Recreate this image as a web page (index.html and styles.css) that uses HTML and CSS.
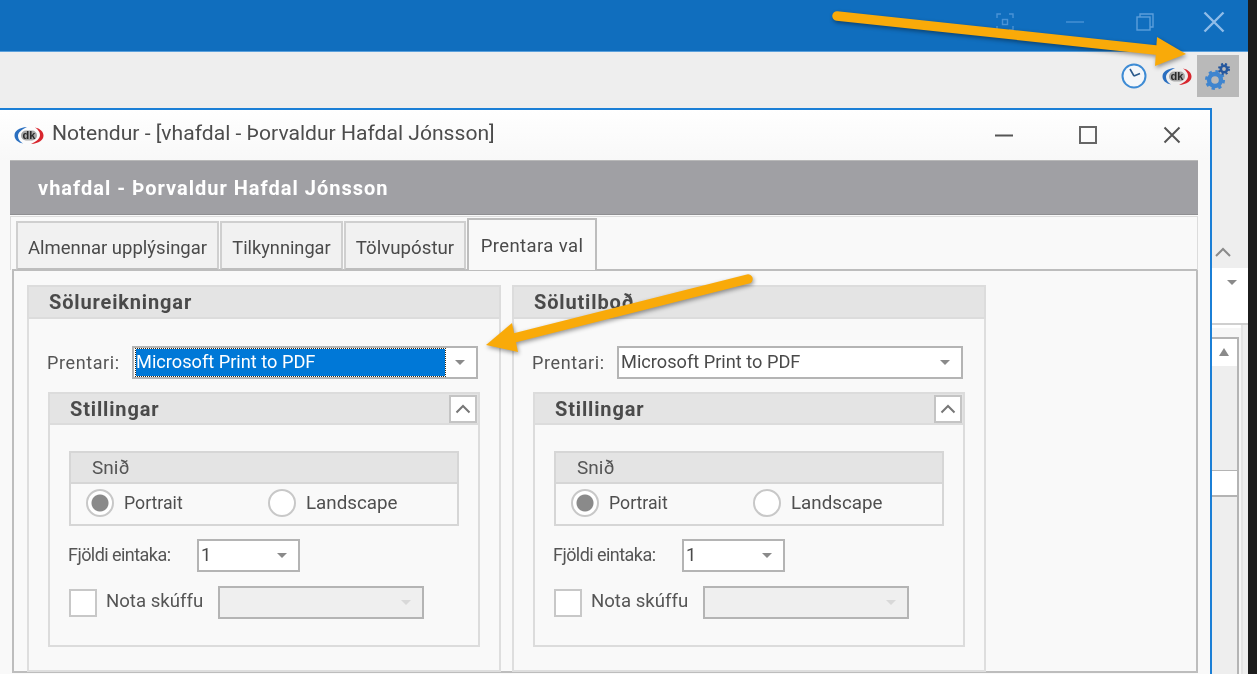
FILE: index.html
```html
<!DOCTYPE html>
<html lang="is">
<head>
<meta charset="utf-8">
<title>Notendur</title>
<link rel="stylesheet" href="styles.css">
</head>
<body>
<svg width="0" height="0" class="defs">
  <defs>
    <g id="dk">
      <path d="M13 1C5 1.5 0.5 5 0.5 9.5C0.5 13.5 4 16.5 9 17.5C6 15.5 4 13 4 10C4 6.5 7.5 3.5 13 1Z" fill="#2a6fc0"/>
      <path d="M17 18C25 17.5 29.5 14 29.5 9.5C29.5 5.5 26 2.5 21 1.5C24 3.5 26 6 26 9C26 12.5 22.5 15.5 17 18Z" fill="#d8262e"/>
      <rect x="7" y="4.5" width="16" height="10" rx="5" fill="#a8a8a8"/>
      <text x="15" y="13.4" class="dk-text">dk</text>
    </g>
  </defs>
</svg>
<div class="app">
  <div class="screen">
    <header class="titlebar">
      <svg class="tb-icon tb-focus" width="18" height="18" viewBox="0 0 18 18"><path d="M1 5V1H5M13 1H17V5M17 13V17H13M5 17H1V13" fill="none" stroke="#4a93d6" stroke-width="1.4"/><rect x="6.5" y="6.5" width="5" height="5" fill="none" stroke="#4a93d6" stroke-width="1.4"/></svg>
      <svg class="tb-icon tb-min" width="18" height="18" viewBox="0 0 18 18"><path d="M0 9H18" stroke="#4a93d6" stroke-width="1.4"/></svg>
      <svg class="tb-icon tb-restore" width="18" height="18" viewBox="0 0 18 18"><path d="M4 4V1H17V14H14" fill="none" stroke="#5c9edb" stroke-width="1.4"/><rect x="1" y="4" width="13" height="13" fill="none" stroke="#5c9edb" stroke-width="1.4"/></svg>
      <svg class="tb-icon tb-close" width="22" height="22" viewBox="0 0 22 22"><path d="M1.5 1.5L20.5 20.5M20.5 1.5L1.5 20.5" stroke="#8fbce8" stroke-width="2.4"/></svg>
    </header>
    <div class="toolbar">
      <svg class="tool-clock" width="26" height="26" viewBox="0 0 26 26"><circle cx="13" cy="13" r="11.5" fill="#f4f7fa" stroke="#3d8bd4" stroke-width="2"/><path d="M13 13L9 6M13 13L19 10.5" stroke="#2b5a8c" stroke-width="1.6" fill="none"/></svg>
      <svg class="tool-dk" width="30" height="19" viewBox="0 0 30 19"><use href="#dk"/></svg>
      <div class="tool-gears">
        <svg width="28" height="28" viewBox="0 0 28 28"><circle cx="11" cy="18" r="6" fill="none" stroke="#3f85cf" stroke-width="4.4"/><circle cx="11" cy="18" r="8.5" fill="none" stroke="#3f85cf" stroke-width="3" stroke-dasharray="3.2 3.5"/><circle cx="20" cy="7" r="3.2" fill="none" stroke="#25579e" stroke-width="2.6"/><circle cx="20" cy="7" r="5" fill="none" stroke="#25579e" stroke-width="2" stroke-dasharray="2 2"/></svg>
      </div>
    </div>
    <div class="workspace">
      <section class="window">
        <div class="win-title">
          <svg class="win-logo" width="30" height="19" viewBox="0 0 30 19"><use href="#dk"/></svg>
          <span class="win-title-text">Notendur - [vhafdal - Þorvaldur Hafdal Jónsson]</span>
          <div class="win-controls">
            <svg width="18" height="18" viewBox="0 0 18 18"><path d="M0 9.5H18" stroke="#555" stroke-width="2"/></svg>
            <svg width="18" height="18" viewBox="0 0 18 18"><rect x="1" y="1" width="16" height="16" fill="none" stroke="#666" stroke-width="2"/></svg>
            <svg width="18" height="18" viewBox="0 0 18 18"><path d="M1.5 1.5L16.5 16.5M16.5 1.5L1.5 16.5" stroke="#555" stroke-width="2"/></svg>
          </div>
        </div>
        <div class="win-body">
          <div class="banner">vhafdal - Þorvaldur Hafdal Jónsson</div>
          <nav class="tabs">
            <div class="tab tab-a">Almennar upplýsingar</div>
            <div class="tab tab-b">Tilkynningar</div>
            <div class="tab tab-c">Tölvupóstur</div>
            <div class="tab tab-active">Prentara val</div>
          </nav>
          <div class="panel">
            <div class="group">
              <h2 class="group-head">Sölureikningar</h2>
              <div class="group-body">
                <div class="printer-row">
                  <span class="label label-printer">Prentari:</span>
                  <div class="combo combo-printer"><span class="combo-selected">Microsoft Print to PDF</span><i class="caret"></i></div>
                </div>
                <div class="settings">
                  <div class="settings-head"><h3>Stillingar</h3><div class="collapse"><svg width="16" height="10" viewBox="0 0 16 10"><path d="M1.5 8.5L8 2L14.5 8.5" fill="none" stroke="#777" stroke-width="2"/></svg></div></div>
                  <div class="layout-box">
                    <div class="layout-head">Snið</div>
                    <div class="layout-row">
                      <span class="radio radio-on"></span><span class="radio-label radio-label-p">Portrait</span>
                      <span class="radio"></span><span class="radio-label radio-label-l">Landscape</span>
                    </div>
                  </div>
                  <div class="copies-row">
                    <span class="label label-copies">Fjöldi eintaka:</span>
                    <div class="combo combo-copies"><span class="combo-value">1</span><i class="caret"></i></div>
                  </div>
                  <div class="tray-row">
                    <span class="checkbox"></span><span class="label label-tray">Nota skúffu</span>
                    <div class="combo combo-tray"><i class="caret caret-off"></i></div>
                  </div>
                </div>
              </div>
            </div>
            <div class="group">
              <h2 class="group-head">Sölutilboð</h2>
              <div class="group-body">
                <div class="printer-row">
                  <span class="label label-printer">Prentari:</span>
                  <div class="combo combo-printer"><span class="combo-value">Microsoft Print to PDF</span><i class="caret"></i></div>
                </div>
                <div class="settings">
                  <div class="settings-head"><h3>Stillingar</h3><div class="collapse"><svg width="16" height="10" viewBox="0 0 16 10"><path d="M1.5 8.5L8 2L14.5 8.5" fill="none" stroke="#777" stroke-width="2"/></svg></div></div>
                  <div class="layout-box">
                    <div class="layout-head">Snið</div>
                    <div class="layout-row">
                      <span class="radio radio-on"></span><span class="radio-label radio-label-p">Portrait</span>
                      <span class="radio"></span><span class="radio-label radio-label-l">Landscape</span>
                    </div>
                  </div>
                  <div class="copies-row">
                    <span class="label label-copies">Fjöldi eintaka:</span>
                    <div class="combo combo-copies"><span class="combo-value">1</span><i class="caret"></i></div>
                  </div>
                  <div class="tray-row">
                    <span class="checkbox"></span><span class="label label-tray">Nota skúffu</span>
                    <div class="combo combo-tray"><i class="caret caret-off"></i></div>
                  </div>
                </div>
              </div>
            </div>
          </div>
        </div>
      </section>
      <aside class="side">
        <div class="side-top"><svg width="16" height="10" viewBox="0 0 16 10"><path d="M1 9L8 2L15 9" fill="none" stroke="#8a8a8a" stroke-width="2"/></svg></div>
        <div class="side-white"><i class="caret"></i></div>
        <div class="side-lower">
          <div class="scroll">
            <div class="scroll-btn"><i class="caret caret-up"></i></div>
            <div class="scroll-track"></div>
            <div class="scroll-thumb"></div>
            <div class="scroll-track scroll-rest"></div>
          </div>
        </div>
      </aside>
    </div>
  </div>
</div>
<svg class="arrows" width="1257" height="674" viewBox="0 0 1257 674">
  <path d="M837 16L1165 51" stroke="#f9aa09" stroke-width="9.5" stroke-linecap="round"/>
  <path d="M1186 54L1157 37L1155 66Z" fill="#f9aa09"/>
  <path d="M748 279L510 339" stroke="#f9aa09" stroke-width="9.5" stroke-linecap="round"/>
  <path d="M486 345L512 323L518 352Z" fill="#f9aa09"/>
</svg>
</body>
</html>
```
FILE: styles.css
```css
* { box-sizing: border-box; }
html, body { margin: 0; padding: 0; }
body {
  width: 1257px;
  height: 674px;
  overflow: hidden;
  position: relative;
  background: #1c1c1c;
  font-family: Roboto, "Open Sans", sans-serif;
  color: #4a4a4a;
  font-size: 18px;
}
.defs { position: absolute; }
.dk-text { font: bold 11px "Liberation Sans", sans-serif; fill: #2a2a2a; text-anchor: middle; }
.app { width: 1257px; height: 674px; filter: blur(0.35px); }
.screen { width: 1248px; height: 674px; display: flex; flex-direction: column; background: #eeeeee; }

.titlebar { height: 52px; flex: none; background: #106ebe; border-bottom: 1px solid #5aa0dc; display: flex; align-items: flex-start; padding-top: 13px; }
.tb-focus { margin-left: 996px; }
.tb-min { margin-left: 52px; }
.tb-restore { margin-left: 52px; }
.tb-close { margin-left: 49px; margin-top: -2px; }

.toolbar { height: 56px; flex: none; display: flex; align-items: flex-start; padding-top: 3px; }
.tool-clock { margin-left: 1121px; margin-top: 8px; }
.tool-dk { margin-left: 15px; margin-top: 12px; }
.tool-gears { width: 42px; height: 42px; margin-left: 5px; background: #b9b9b9; display: flex; align-items: center; justify-content: center; }

.workspace { flex: 1; display: flex; min-height: 0; }
.window { width: 1212px; flex: none; background: #f9f9f9; border-top: 2px solid #1b7fd6; border-right: 2px solid #1b7fd6; }
.win-title { height: 50px; display: flex; align-items: center; padding-left: 14px; background: linear-gradient(#fff, #f8f8f8); }
.win-logo { flex: none; }
.win-title-text { margin-left: 8px; font-size: 21.1px; color: #4d4d4d; margin-top: -5px; white-space: nowrap; }
.win-controls { margin-left: auto; display: flex; gap: 66px; margin-right: 29px; }

.win-body { margin-left: 10px; width: 1188px; }
.banner { height: 55px; background: #a0a0a4; color: #fff; font-weight: 700; font-size: 20px; letter-spacing: 1px; line-height: 55px; padding-left: 28px; border-top: 1px solid #b8b8b8; border-bottom: 1px solid #8f8f92; }
.tabs { display: flex; height: 54px; margin: 1px 0 0; padding-left: 5px; align-items: flex-end; border-top: 1px solid #dcdcdc; border-right: 1px solid #dcdcdc; border-left: 1px solid #dcdcdc; position: relative; z-index: 1; }
.tab { height: 49px; background: #f1f1f1; border: 2px solid #cfcfcf; border-bottom: 2px solid #bdbdbd; line-height: 50px; text-align: center; white-space: nowrap; margin-right: 1px; }
.tab-a { width: 203px; font-size: 18.5px; }
.tab-b { width: 123px; font-size: 18.2px; }
.tab-c { width: 122px; font-size: 18.7px; }
.tab-active { width: 130px; height: 52px; background: #f9f9f9; border-color: #bdbdbd; border-bottom: 0; line-height: 52px; font-size: 18.5px; letter-spacing: .4px; }
.panel { margin: -1px 0 0 2px; width: 1186px; height: 404px; border: 2px solid #bdbdbd; padding: 14px 0 0 13px; background: #f9f9f9; display: flex; gap: 11px; align-items: flex-start; }

.group { width: 474px; height: 387px; border: 2px solid #dedede; border-top: 0; }
.group-head { margin: 0 -2px; height: 34px; background: #e4e4e4; border: 2px solid #dcdcdc; font-size: 20px; letter-spacing: .85px; font-weight: 700; line-height: 30px; padding-left: 20px; color: #4a4a4a; }
.group-body { padding: 27px 0 0 19px; }

.printer-row { display: flex; align-items: center; height: 33px; margin-left: -1px; }
.label { white-space: nowrap; color: #555; }
.label-printer { width: 85px; flex: none; margin-top: -1px; font-size: 18px; letter-spacing: .6px; }
.combo { height: 33px; background: #fff; border: 2px solid #b4b4b4; position: relative; display: flex; align-items: center; font-size: 18.2px; }
.combo-printer { width: 346px; }
.combo-selected { display: block; width: 309px; height: 27px; margin: -1px 0 0 2px; padding-left: 0; background: #0078d7; color: #fff; outline: 1px dotted #3a2a10; outline-offset: 0; line-height: 25px; white-space: nowrap; }
.combo-value { padding-left: 2px; white-space: nowrap; color: #4a4a4a; margin-top: -2px; }
.caret { position: absolute; right: 11px; top: 12px; width: 0; height: 0; border-left: 5px solid transparent; border-right: 5px solid transparent; border-top: 5px solid #8a8a8a; }
.caret-off { border-top-color: #d8d8d8; }
.caret-up { border-top: 0; border-bottom: 8px solid #8a8a8a; top: 9px; right: 8px; }

.settings { width: 432px; height: 255px; margin-top: 13px; border: 2px solid #dcdcdc; }
.settings-head { height: 33px; margin: -2px -2px 0; background: #e4e4e4; border: 2px solid #dcdcdc; display: flex; align-items: center; justify-content: space-between; padding: 0 1px 0 20px; }
.settings-head h3 { margin: 0; font-size: 20px; letter-spacing: .85px; font-weight: 700; color: #4a4a4a; }
.collapse { width: 28px; height: 28px; background: #fff; border: 2px solid #c4c4c4; display: flex; align-items: center; justify-content: center; }

.layout-box { width: 390px; height: 75px; margin: 26px 0 0 19px; border: 2px solid #d6d6d6; border-top: 0; }
.layout-head { height: 33px; margin: 0 -2px; background: #e4e4e4; border: 2px solid #d6d6d6; font-size: 19px; line-height: 30px; padding-left: 21px; color: #555; }
.layout-row { height: 38px; display: flex; align-items: center; padding-left: 15px; }
.radio { width: 28px; height: 28px; flex: none; border-radius: 50%; background: #fff; border: 2px solid #c8c8c8; }
.radio-on { background: radial-gradient(circle, #8a8a8a 0 8px, #fff 9px); }
.radio-label { margin-left: 10px; color: #4f4f4f; }
.radio-label-p { width: 144px; font-size: 17.7px; }
.radio-label-l { font-size: 18.8px; }

.copies-row { display: flex; align-items: center; height: 33px; margin: 13px 0 0 18px; }
.label-copies { width: 129px; flex: none; margin-top: -2px; font-size: 18px; letter-spacing: -.55px; }
.combo-copies { width: 103px; }
.tray-row { display: flex; align-items: center; height: 33px; margin: 14px 0 0 19px; }
.checkbox { width: 28px; height: 28px; flex: none; background: #fff; border: 2px solid #c8c8c8; }
.label-tray { width: 112px; flex: none; margin-left: 9px; margin-top: -4px; font-size: 18.6px; }
.combo-tray { width: 206px; background: #efefef; }

.side { flex: 1; display: flex; flex-direction: column; min-width: 0; }
.side-top { height: 160px; flex: none; background: #eeeeee; display: flex; align-items: flex-end; padding: 0 0 11px 3px; }
.side-white { height: 57px; flex: none; background: #fff; position: relative; border-bottom: 2px solid #cfcfcf; }
.side-lower { flex: 1; background: #f6f6f6; padding-top: 12px; margin-right: 5px; border-right: 2px solid #e4e4e4; box-shadow: inset 0 3px 0 #fff; }
.scroll { width: 27px; height: 100%; border-right: 2px solid #b4b4b4; border-top: 2px solid #b4b4b4; display: flex; flex-direction: column; }
.scroll-btn { height: 27px; flex: none; background: #fff; position: relative; }
.scroll-track { height: 104px; flex: none; background: #eeeeee; }
.scroll-thumb { height: 27px; flex: none; background: #fff; border-top: 1px solid #b4b4b4; border-bottom: 2px solid #b4b4b4; }
.scroll-rest { flex: 1; }

.arrows { position: absolute; left: 0; top: 0; filter: drop-shadow(1px 2px 2px rgba(0,0,0,.4)) blur(0.3px); pointer-events: none; }
```
